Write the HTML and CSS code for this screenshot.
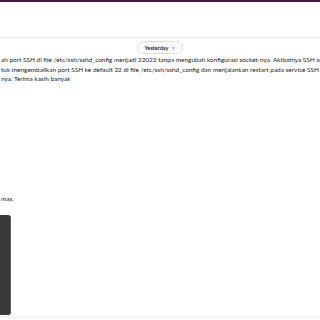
FILE: index.html
```html
<!DOCTYPE html>
<html lang="id">
<head>
    <meta charset="UTF-8">
    <meta name="viewport" content="width=device-width, initial-scale=1.0">
    <title>Thread</title>
    <link rel="stylesheet" href="styles.css">
</head>
<body>
    <div class="topbar"></div>
    <div class="header"></div>

    <div class="messages">
        <div class="day-row">
            <span class="day-pill">Yesterday
                <svg class="chev" width="5" height="4" viewBox="0 0 5 4"><path d="M1 1.2 L2.5 2.7 L4 1.2" fill="none" stroke="#616061" stroke-width="0.8"/></svg>
            </span>
        </div>

        <div class="msg">
            <div class="line">ah port SSH di file /etc/ssh/sshd_config menjadi 22022 tanpa mengubah konfigurasi socket-nya. Akibatnya SSH sempat</div>
            <div class="line">tuk mengembalikan port SSH ke default 22 di file /etc/ssh/sshd_config dan menjalankan restart pada service SSH agar</div>
            <div class="line">nya. Terima kasih banyak</div>
        </div>

        <div class="msg reply">
            <div class="line">mas.</div>
        </div>

        <div class="side-panel"></div>
    </div>

    <div class="footer"></div>
</body>
</html>
```

FILE: styles.css
```css
body {
    margin: 0;
    width: 320px;
    height: 320px;
    overflow: hidden;
    background: #ffffff;
    font-family: Lato, "Noto Sans", sans-serif;
    color: #1d1c1d;
}
.topbar {
    height: 2px;
    background: #4a154b;
}
.header {
    height: 35px;
    border-bottom: 1px solid #ececec;
}
.messages {
    height: 278px;
}
.day-row {
    display: flex;
    justify-content: center;
    padding-top: 3px;
}
.day-pill {
    display: inline-flex;
    align-items: center;
    gap: 3px;
    height: 11px;
    padding: 0 6px 0 7px;
    border: 1px solid #dddddd;
    border-radius: 7px;
    font-size: 5.5px;
    font-weight: bold;
    color: #1d1c1d;
}
.msg {
    padding-top: 1px;
}
.line {
    font-size: 6.45px;
    line-height: 9.5px;
    white-space: nowrap;
    overflow: hidden;
    padding-left: 1px;
}
.reply {
    padding-top: 110px;
}
.side-panel {
    width: 10px;
    height: 100px;
    margin-top: 12px;
    background: #3a3a3a;
    border-right: 1px solid #5a5a5a;
    border-radius: 0 3px 3px 0;
}
.footer {
    height: 3px;
    background: #f6f6f6;
}
```
